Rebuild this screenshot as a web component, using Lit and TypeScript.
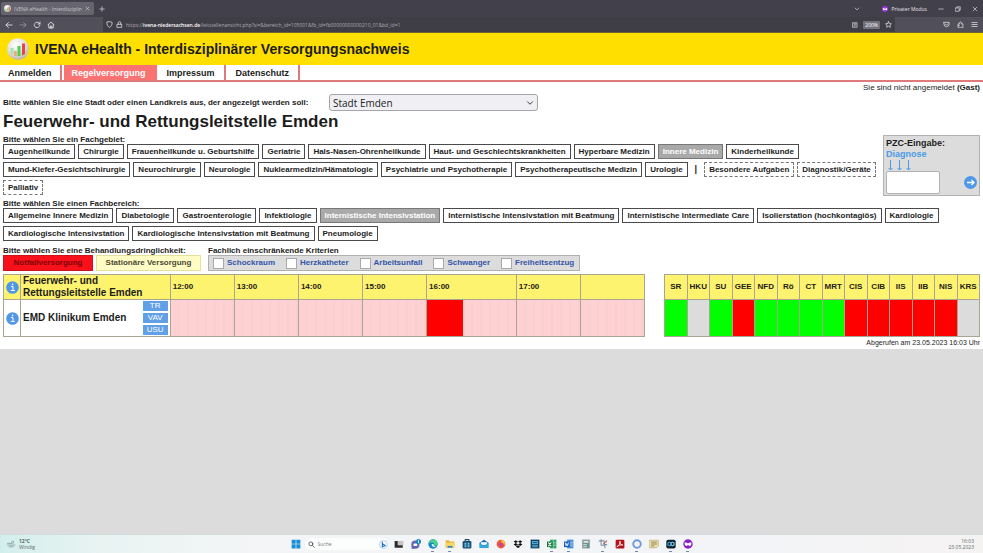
import { LitElement, html, css, svg, nothing } from "lit";
import { customElement } from "lit/decorators.js";
import { classMap } from "lit/directives/class-map.js";
import { styleMap } from "lit/directives/style-map.js";

type Chip = { label: string; active?: boolean; dashed?: boolean; bar?: boolean };

const chips = (...labels: string[]): Chip[] =>
  labels.map((l) => ({
    label: l.replace(/^[*~]/, ""),
    active: l.startsWith("*"),
    dashed: l.startsWith("~"),
  }));

const FACHGEBIETE: Chip[] = [
  ...chips(
    "Augenheilkunde", "Chirurgie", "Frauenheilkunde u. Geburtshilfe", "Geriatrie",
    "Hals-Nasen-Ohrenheilkunde", "Haut- und Geschlechtskrankheiten", "Hyperbare Medizin",
    "*Innere Medizin", "Kinderheilkunde", "Mund-Kiefer-Gesichtschirurgie", "Neurochirurgie",
    "Neurologie", "Nuklearmedizin/Hämatologie", "Psychiatrie und Psychotherapie",
    "Psychotherapeutische Medizin", "Urologie"
  ),
  { label: "|", bar: true },
  ...chips("~Besondere Aufgaben", "~Diagnostik/Geräte", "~Palliativ"),
];

const FACHBEREICHE = chips(
  "Allgemeine Innere Medizin", "Diabetologie", "Gastroenterologie", "Infektiologie",
  "*Internistische Intensivstation", "Internistische Intensivstation mit Beatmung",
  "Internistische Intermediate Care", "Isolierstation (hochkontagiös)", "Kardiologie",
  "Kardiologische Intensivstation", "Kardiologische Intensivstation mit Beatmung", "Pneumologie"
);

const KRITERIEN = ["Schockraum", "Herzkatheter", "Arbeitsunfall", "Schwanger", "Freiheitsentzug"];

const STUNDEN = [
  { label: "12:00", span: 10 },
  { label: "13:00", span: 10 },
  { label: "14:00", span: 10 },
  { label: "15:00", span: 10 },
  { label: "16:00", span: 14, closed: 40 },
  { label: "17:00", span: 10 },
  { label: "", span: 10 },
];
const SPAN_TOTAL = STUNDEN.reduce((sum, h) => sum + h.span, 0);
/** Share of the table, in percent, that the hours take together. */
const HOURS_SHARE = 74;

const RESSOURCEN: [string, string][] = [
  ["SR", "free"], ["HKU", "none"], ["SU", "free"], ["GEE", "shut"], ["NFD", "free"],
  ["Rö", "free"], ["CT", "free"], ["MRT", "free"], ["CIS", "shut"], ["CIB", "shut"],
  ["IIS", "shut"], ["IIB", "shut"], ["NIS", "shut"], ["KRS", "none"],
];

const icon = (body: unknown, size = 8, stroke = "currentColor") => html`<svg
  width=${size} height=${size} viewBox="0 0 16 16" fill="none" stroke=${stroke}
  stroke-width="1.7" stroke-linecap="round" stroke-linejoin="round" aria-hidden="true">${body}</svg>`;

const I = {
  back: svg`<path d="M14 8H2M7 3 2 8l5 5"/>`,
  forward: svg`<path d="M2 8h12M9 3l5 5-5 5"/>`,
  reload: svg`<path d="M13.500 9A5.500 5.500 0 1 1 12 4l2 2M14 2v4h-4"/>`,
  home: svg`<path d="M2 7.500 8 2l6 5.500M3.500 7v7h9V7M6.500 14v-4h3v4"/>`,
  shield: svg`<path d="M8 1.500 14 3c0 6-1.500 9-6 11.500C3.500 12 2 9 2 3z"/>`,
  lock: svg`<path d="M3 7.500h10v7H3zM5 7.500V4.500a3 3 0 0 1 6 0v3"/>`,
  reader: svg`<path d="M2.500 2h11v12h-11zM5.500 5h5M5.500 8h5M5.500 11h2"/>`,
  star: svg`<path d="m8 1.500 2 4.300 4.700.6-3.400 3.200.8 4.700L8 12l-4.100 2.300.8-4.700L1.300 6.400 6 5.800z"/>`,
  pocket: svg`<path d="M2 3h12v4a6 6 0 0 1-12 0zM5 6.500l3 3 3-3"/>`,
  ext: svg`<path d="M2.500 14.500v-8H6V4a2 2 0 0 1 4 0v2.500h3.500v8zM2.500 10h3"/>`,
  menu: svg`<path d="M2 3.500h12M2 8h12M2 12.500h12"/>`,
  down: svg`<path d="m3 5.500 5 5 5-5"/>`,
  close: svg`<path d="m3 3 10 10M13 3 3 13"/>`,
  plus: svg`<path d="M8 2v12M2 8h12"/>`,
  min: svg`<path d="M2 8h12"/>`,
  max: svg`<path d="M2 5h9v9H2zM5 5V2h9v9h-3"/>`,
  search: svg`<circle cx="6.500" cy="6.500" r="4.500"/><path d="m10 10 4.500 4.500"/>`,
  wind: svg`<path stroke="#8fa3a6" d="M1 6h9a2 2 0 1 0-2-2M1 9h13M4 12h7"/>`,
};

const logo = (size: number) => html`<svg width=${size} height=${size} viewBox="0 0 22 22" aria-hidden="true">
  <defs><radialGradient id="ball" cx=".4" cy=".3" r=".75">
    <stop offset="0" stop-color="#fff"/><stop offset=".6" stop-color="#dfdfdc"/><stop offset="1" stop-color="#b8b29a"/>
  </radialGradient></defs>
  <circle cx="11" cy="11" r="10.800" fill="url(#ball)"/>
  <path fill="#a4e4b0" d="M3.500 10h3v7l-3-1.500z"/>
  <path fill="#f0a880" d="M7 13h2.800v5H7z"/>
  <path fill="#4fce50" d="M10.500 8h3v10h-3z"/>
  <path fill="#e8404c" d="M15 5.500h3v10.500l-3 1.500z"/>
</svg>`;

const APPS: { name: string; art: unknown; open?: boolean }[] = [
  { name: "Taskansicht", art: svg`<path fill="#c4c4c4" d="M6 3h9v7H6z"/><path fill="#2b2b2b" d="M1 3h5v7h8v4H1z"/>` },
  { name: "Chat", art: svg`<circle cx="7" cy="9" r="6.500" fill="#6463b8"/><path fill="#6463b8" d="M1 11v5l5-1z"/><rect x="4" y="7" width="6" height="4" rx="1" fill="#fff"/><circle cx="12" cy="4" r="4" fill="#1787b5"/><path stroke="#fff" stroke-width="1.200" d="M12 2v4"/>` },
  { name: "Edge", open: true, art: svg`<circle cx="8" cy="8" r="7.500" fill="#1586c8"/><path fill="#4fd08c" d="M8 .5A7.500 7.500 0 0 1 15.500 8c0 3-5 3-6 1 1-3-2-5-8-2A7.500 7.500 0 0 1 8 .5z"/><path fill="#dff4fa" d="M6 8c-1 4 3 6 7 4-3-1-5-2-4-4z"/>` },
  { name: "Explorer", open: true, art: svg`<path fill="#e8b43a" d="M1 2h5l2 2h7v10H1z"/><path fill="#fbd966" d="M1 6h14v8H1z"/><path fill="#3a86d0" d="M4 11h8v3H4z"/>` },
  { name: "Store", art: svg`<rect x="1" y="3" width="14" height="12" rx="2" fill="#1d4e6e"/><path stroke="#1d4e6e" d="M5 3V1h6v2"/><path fill="#6cc7ef" d="M4 6h3v3H4zM9 6h3v3H9zM4 10h3v3H4zM9 10h3v3H9z"/>` },
  { name: "Mail", art: svg`<path fill="#1569b0" d="M1 6l7-5 7 5v8H1z"/><path fill="#e8f5fc" d="M3 5h10v5H3z"/><path fill="#31a8e6" d="m1 6 7 5 7-5v8H1z"/>` },
  { name: "Firefox", art: svg`<circle cx="8" cy="8" r="7" fill="#f2583c"/><path fill="#fbc23c" d="M9 1c5 2 6 6 5 9-2-3-3-4-6-5z"/><circle cx="8" cy="9" r="3" fill="#c1459c"/>` },
  { name: "Dropbox", art: svg`<path fill="#111" d="m4.500 2 3.500 2.300L4.500 6.500 1 4.300zM11.500 2 15 4.300l-3.500 2.200L8 4.300zM4.500 6.500 8 8.800 4.500 11 1 8.800zM11.500 6.500 15 8.800 11.500 11 8 8.800zM8 10l3.500 2.200L8 14.500l-3.500-2.300z"/>` },
  { name: "Paketmanager", art: svg`<rect x="1" y="1" width="14" height="14" fill="#153f5f"/><path stroke="#4ea9d6" d="M4 4h8v3H4zM4 10h8M4 12.500h8"/>` },
  { name: "Excel", open: true, art: svg`<path fill="#2fa566" d="M5 1h10v14H5z"/><path stroke="#b6e3c9" stroke-width="1" d="M10 1v14M5 6h10M5 10h10"/><path fill="#17703f" d="M0 4h9v9H0z"/><path stroke="#fff" d="m2.500 6 4 5M6.500 6l-4 5"/>` },
  { name: "Word", open: true, art: svg`<path fill="#3f8fdc" d="M5 1h10v14H5z"/><path stroke="#cfe3f8" stroke-width="1" d="M10 5h4M10 8h4M10 11h4"/><path fill="#1c57ac" d="M0 4h9v9H0z"/><path stroke="#fff" stroke-width="1.200" d="m2 6 1.200 5L4.500 7l1.300 4L7 6"/>` },
  { name: "Rechner", art: svg`<path fill="#7d8c8c" d="M2 1h12v14H2z"/><path fill="#d5eee8" d="M4 3h8v3H4z"/><path fill="#e8efef" d="M4 8h2v2H4zM7 8h2v2H7zM4 11h2v2H4zM7 11h2v2H7z"/><path fill="#3aa7a0" d="M10 8h2v5h-2z"/>` },
  { name: "Ausschneiden", open: true, art: svg`<path stroke="#7b93a8" d="M2 3h8v6h4M5 1v9h6v4"/><path stroke="#c5664d" d="m9 8 5-5"/>` },
  { name: "Acrobat", art: svg`<rect x="1" y="1" width="14" height="14" rx="2" fill="#b5131a"/><path stroke="#fff" stroke-width="1.300" d="M3.500 12c3-1 5-5 4.500-8.500C7.500 8 10 10 12.500 9.500 9 9 6 10 3.500 12z"/>` },
  { name: "Signal", open: true, art: svg`<circle cx="8" cy="8" r="6" stroke="#6b98e0" stroke-width="3"/>` },
  { name: "Notizen", art: svg`<path fill="#f0e2a8" stroke="#a79c6c" stroke-width="1" d="M1 2h14v9l-3 3H1z"/><path stroke="#6d6648" stroke-width="1.200" d="M4 5h8M4 8h8M4 11h4"/>` },
  { name: "Webex", open: true, art: svg`<rect x=".5" y="1" width="15" height="14" rx="3" fill="#12242e"/><circle cx="5.500" cy="8" r="2.700" stroke="#42a5d8"/><circle cx="10.500" cy="8" r="2.700" stroke="#7fd0ea"/>` },
  { name: "Privates Fenster", open: true, art: svg`<circle cx="8" cy="8" r="7.500" fill="#8a22c5"/><path fill="#fff" d="M2.500 6q2.500-1 5.500 1 3-2 5.500-1 0 5-3 5L8 9.500 5.500 11q-3 0-3-5z"/>` },
];

@customElement("browser-chrome")
export class BrowserChrome extends LitElement {
  static styles = css`
    :host { display: block; color: #e6e4ea; font: 5px/8px "Open Sans", "Noto Sans", sans-serif; }
    svg { display: block; flex: none; }
    button { all: unset; display: grid; place-items: center; flex: none; }
    .tabs { display: flex; align-items: center; height: 17px; background: #42404a; padding-right: 5px; }
    .tab { display: flex; align-items: center; gap: 3px; height: 13px; margin: 0 5px 0 1px; padding: 0 4px 0 3px; border-radius: 2px; background: #66646f; }
    .tab-title { white-space: nowrap; color: #c9c7ce; }
    .spacer { flex: 1; }
    .private { display: flex; align-items: center; gap: 3px; margin: 0 11px 0 22px; }
    .window { display: flex; gap: 11px; }
    .bar { display: flex; align-items: center; height: 15px; background: #514f59; border-bottom: 1px solid #6f6430; }
    .nav { display: flex; gap: 6px; padding: 0 5px; width: 93px; }
    .dim { opacity: 0.45; }
    .url { display: flex; align-items: center; gap: 3px; flex: 1; height: 15px; padding: 0 3px; background: #3f3d46; }
    .address { all: unset; flex: 1; color: #aeacb4; }
    .address b { color: #fff; font-weight: 600; }
    .zoom { background: #73717b; padding: 0 2px; border-radius: 1px; color: #fff; margin: 0 2px; }
    .tools { display: flex; gap: 7px; padding: 0 5px 0 48px; }
  `;
  render() {
    return html`
      <div class="tabs">
        <div class="tab">${logo(7)}<span class="tab-title">IVENA eHealth - Interdisziplin</span>
          <button aria-label="Tab schließen">${icon(I.close, 5)}</button></div>
        <button aria-label="Neuer Tab">${icon(I.plus, 6)}</button>
        <span class="spacer"></span>
        <button aria-label="Alle Tabs">${icon(I.down, 6)}</button>
        <span class="private">
          <svg width="6" height="6" viewBox="0 0 16 16" aria-hidden="true"><circle cx="8" cy="8" r="8" fill="#9a35e0"/><path fill="#fff" d="M2 6q3-1 6 1 3-2 6-1 0 5-3 5L8 9.500 5 11q-3 0-3-5z"/></svg>
          Privater Modus</span>
        <span class="window">
          <button aria-label="Minimieren">${icon(I.min, 6)}</button>
          <button aria-label="Wiederherstellen">${icon(I.max, 6)}</button>
          <button aria-label="Schließen">${icon(I.close, 6)}</button>
        </span>
      </div>
      <div class="bar">
        <div class="nav">
          <button aria-label="Zurück">${icon(I.back)}</button>
          <button class="dim" aria-label="Vor">${icon(I.forward)}</button>
          <button aria-label="Neu laden">${icon(I.reload)}</button>
          <button aria-label="Startseite">${icon(I.home)}</button>
        </div>
        <div class="url">
          ${icon(I.shield, 7)}${icon(I.lock, 7)}
          <a class="address" href="#">https://<b>ivena-niedersachsen.de</b>/leitstellenansicht.php?si=&amp;bereich_id=105001&amp;fb_id=fb00000000000210_01&amp;bd_id=1</a>
          ${icon(I.reader, 6)}<span class="zoom">200%</span>${icon(I.star, 7)}
        </div>
        <div class="tools">
          <button aria-label="Pocket">${icon(I.pocket, 7)}</button>
          <button aria-label="Erweiterungen">${icon(I.ext, 7)}</button>
          <button aria-label="Menü">${icon(I.menu, 7)}</button>
        </div>
      </div>`;
  }
}

@customElement("task-bar")
export class TaskBar extends LitElement {
  static styles = css`
    :host { display: grid; grid-template-columns: 1fr auto 1fr; align-items: center; height: 19px;
      background: linear-gradient(90deg, #d3efec, #e8f3f2 10%, #f3f5f6 25%, #f2f4f7 75%, #f5f2f2);
      border-top: 1px solid #d2dcdc; font: 5px/6px "Open Sans", "Noto Sans", sans-serif; color: #5b6b6c; }
    svg { display: block; flex: none; }
    button { all: unset; display: grid; place-items: center; position: relative; }
    .weather { display: flex; align-items: center; gap: 3px; padding-left: 7px; }
    .weather b { display: block; }
    .center { display: flex; align-items: center; gap: 7px; }
    .find { display: flex; align-items: center; gap: 3px; width: 80px; height: 12px; padding: 0 1px 0 3px; border-radius: 6px; background: #fbfcfc; color: #444; margin: 0 -2px 0 -3px; }
    .find input { all: unset; flex: 1; width: 20px; }
    .find input::placeholder { color: #777; }
    .open::after { content: ""; position: absolute; bottom: -3px; width: 3px; height: 1px; background: #6d8ba3; }
    .clock { text-align: right; padding-right: 9px; }
  `;
  render() {
    return html`
      <div class="weather">${icon(I.wind, 9)}<span><b>12°C</b>Windig</span></div>
      <div class="center">
        <button aria-label="Start"><svg width="10" height="10" viewBox="0 0 16 16"><path fill="#1b8fd6" d="M1 1h6.500v6.500H1zM8.500 1H15v6.500H8.500zM1 8.500h6.500V15H1zM8.500 8.500H15V15H8.500z"/></svg></button>
        <label class="find">${icon(I.search, 7)}<input placeholder="Suche" aria-label="Suche" />
          <svg width="9" height="9" viewBox="0 0 16 16" fill="none" aria-hidden="true"><circle cx="8" cy="8" r="7" stroke="#7db5e0"/><path stroke="#1f74c6" stroke-width="2" d="M6 3v9l5-2-4-3"/></svg>
        </label>
        ${APPS.map((a) => html`<button aria-label=${a.name} class=${classMap({ open: !!a.open })}>${icon(a.art, 10, "none")}</button>`)}
      </div>
      <div class="clock">16:03<br />23.05.2023</div>`;
  }
}

@customElement("app-root")
export class AppRoot extends LitElement {
  static styles = css`
    :host { display: flex; flex-direction: column; min-height: 100vh; background: #dcdcdc; color: #1c1c1c;
      font: 8px/10px "Liberation Sans", Arial, sans-serif; }
    * { box-sizing: border-box; }
    button { font: inherit; color: inherit; margin: 0; }
    svg { display: block; flex: none; }
    .page { background: #fff; }
    .brand { display: flex; align-items: center; gap: 6px; height: 32px; padding-left: 7px; background: #ffdf00; font: bold 14px/18px "Liberation Sans", Arial, sans-serif; }
    .menu { display: flex; height: 17px; border-bottom: 2px solid #df7a7c; font-size: 9px; font-weight: bold; }
    .menu a { display: flex; align-items: center; padding: 0 9px 0 10px; border-right: 2px solid #df7a7c; color: inherit; text-decoration: none; }
    .menu a:first-child { padding: 0 8px; }
    .menu .current { margin-left: 2px; padding: 0 9px 0 8px; background: #fa7373; color: #fff; border-color: #fa7373; }
    .login { text-align: right; padding: 1px 3px; }
    .body { padding: 0 3px; }
    .city { display: flex; align-items: center; gap: 4px; font-weight: bold; }
    .city label { min-width: 322px; }
    .drop { display: grid; align-items: center; width: 209px; }
    .drop > * { grid-area: 1 / 1; }
    .drop svg { justify-self: end; margin-right: 4px; pointer-events: none; }
    select { appearance: none; width: 100%; height: 17px; padding: 0 3px; border: 1px solid #a5a5aa; border-radius: 3px; background: #f0f0f4; color: #222; font: 10px/14px "Open Sans", "Noto Sans", sans-serif; }
    h1 { margin: 0 0 2px; font-size: 17px; line-height: 22px; }
    h2 { margin: 0; font-size: 8px; line-height: 9px; }
    .area { display: flex; align-items: flex-start; gap: 3px; }
    .grow { flex: 1; }
    .chips { display: flex; flex-wrap: wrap; gap: 3px; }
    .chip { height: 15px; padding: 0 4px; border: 1px solid #4a4a4a; background: #fff; font-weight: bold; white-space: nowrap; }
    .chip.active { background: #a9a9a9; color: #fff; border-color: #777; }
    .chip.dashed { border-style: dashed; border-color: #777; }
    .bar { padding: 0 4px; font-weight: bold; font-size: 9px; line-height: 14px; }
    .pzc { width: 97px; height: 61px; padding: 2px; background: #dcdcdc; border: 1px solid #b2b2b2; font-size: 9px; font-weight: bold; line-height: 11px; }
    .pzc label { display: block; }
    .pzc em { display: block; font-style: normal; color: #4a9be8; }
    .entry { display: flex; justify-content: space-between; align-items: center; }
    .entry input { width: 54px; height: 23px; border: 1px solid #b2b2b2; border-radius: 2px; background: #fff; }
    .round { all: unset; display: grid; }
    .section { margin-top: 3px; }
    .urgency { display: flex; gap: 7px; margin-top: 5px; }
    .pair { display: flex; gap: 3px; }
    .wide { height: 16px; border: 1px solid #e6e09a; background: #fffcc6; color: #4c4a30; font-weight: bold; width: 105px; padding: 0; }
    .wide.red { width: 90px; background: #f8101a; color: #7c0408; border-color: #c8141a; }
    .criteria { display: flex; gap: 11px; height: 16px; align-items: center; padding: 0 5px 0 4px; background: #dcdcdc; border: 1px solid #b0b0b0; color: #3354a8; font-weight: bold; }
    .criteria label { display: flex; align-items: center; gap: 3px; }
    .criteria input { appearance: none; width: 11px; height: 11px; margin: 0; border: 1px solid #a9a9a9; background: #fff; }
    .tables { display: grid; grid-template-columns: 642fr 316fr; gap: 19px; margin-top: 3px; }
    table { border-collapse: collapse; table-layout: fixed; width: 100%; }
    th, td { border: 1px solid #aaa592; padding: 0; }
    th { height: 25px; background: #fdf36e; text-align: left; font-size: 8px; }
    td { height: 36px; }
    .info { width: 17px; }
    .info svg { margin: auto; }
    .house { padding-left: 2px; font-size: 10px; line-height: 12px; }
    .clinic { display: flex; align-items: center; justify-content: space-between; padding-right: 2px; font-size: 10px; font-weight: bold; }
    .tags { display: grid; gap: 2px; width: 25px; font-size: 8px; font-weight: normal; line-height: 10px; text-align: center; }
    .tags a { color: #fff; background: #619fe6; text-decoration: none; }
    .hour { padding-left: 2px; }
    .slot { background: repeating-linear-gradient(90deg, #ffd0d2 0 8px, #ecd0d0 8px 9px); }
    .closed { height: 36px; background: #f00; }
    .res th { text-align: center; }
    .free { background: #0f0; }
    .shut { background: #f00; }
    .none { background: #dcdcdc; }
    .stamp { text-align: right; font-size: 7px; line-height: 12px; }
    .rest { flex: 1; }
  `;

  private chip(c: Chip) {
    return c.bar
      ? html`<span class="bar">${c.label}</span>`
      : html`<button class=${classMap({ chip: true, active: !!c.active, dashed: !!c.dashed })}>${c.label}</button>`;
  }

  private info() {
    return html`<svg width="13" height="13" viewBox="0 0 13 13" role="img" aria-label="Info">
      <circle cx="6.500" cy="6.500" r="6.300" fill="#4f97e8" />
      <path d="M5 5.500h2v4M4.800 9.500h4" stroke="#fff" fill="none" /><circle cx="6.600" cy="3.400" r=".8" fill="#fff" />
    </svg>`;
  }

  render() {
    return html`
      <browser-chrome></browser-chrome>
      <main class="page">
        <header class="brand">${logo(22)}<span>IVENA eHealth - Interdisziplinärer Versorgungsnachweis</span></header>
        <nav class="menu">
          <a href="#">Anmelden</a><a href="#" class="current">Regelversorgung</a><a href="#">Impressum</a><a href="#">Datenschutz</a>
        </nav>
        <div class="login">Sie sind nicht angemeldet <b>(Gast)</b></div>
        <div class="body">
          <div class="city">
            <label for="city">Bitte wählen Sie eine Stadt oder einen Landkreis aus, der angezeigt werden soll:</label>
            <span class="drop"><select id="city"><option>Stadt Emden</option></select>${icon(I.down, 8)}</span>
          </div>
          <h1>Feuerwehr- und Rettungsleitstelle Emden</h1>
          <div class="area">
            <section class="grow">
              <h2>Bitte wählen Sie ein Fachgebiet:</h2>
              <div class="chips">${FACHGEBIETE.map((c) => this.chip(c))}</div>
            </section>
            <form class="pzc">
              <label for="pzc">PZC-Eingabe:<em>Diagnose</em></label>
              <svg width="30" height="11" viewBox="0 0 30 11" fill="none" stroke="#4a9be8" aria-hidden="true">
                <path d="M4.500 0v10M2.500 8l2 2 2-2M13.500 0v10M11.500 8l2 2 2-2M22.500 0v10M20.500 8l2 2 2-2" />
              </svg>
              <div class="entry">
                <input id="pzc" />
                <button type="button" class="round" aria-label="Suchen">
                  <svg width="13" height="13" viewBox="0 0 13 13"><circle cx="6.500" cy="6.500" r="6.500" fill="#4f97e8" /><path d="M3 6.500h7M7.500 4 10 6.500 7.500 9" stroke="#fff" stroke-width="1.300" fill="none" /></svg>
                </button>
              </div>
            </form>
          </div>
          <section class="section">
            <h2>Bitte wählen Sie einen Fachbereich:</h2>
            <div class="chips">${FACHBEREICHE.map((c) => this.chip(c))}</div>
          </section>
          <div class="urgency">
            <section>
              <h2>Bitte wählen Sie eine Behandlungsdringlichkeit:</h2>
              <div class="pair"><button class="wide red">Notfallversorgung</button><button class="wide">Stationäre Versorgung</button></div>
            </section>
            <section>
              <h2>Fachlich einschränkende Kriterien</h2>
              <div class="criteria">${KRITERIEN.map((k) => html`<label><input type="checkbox" />${k}</label>`)}</div>
            </section>
          </div>
          <div class="tables">
            <table>
              <thead><tr>
                <th class="info">${this.info()}</th>
                <th class="house">Feuerwehr- und<br />Rettungsleitstelle Emden</th>
                ${STUNDEN.map((h) => html`<th class="hour" style=${styleMap({ width: `${(h.span / SPAN_TOTAL) * HOURS_SHARE}%` })}>${h.label}</th>`)}
              </tr></thead>
              <tbody><tr>
                <td class="info">${this.info()}</td>
                <td class="house"><div class="clinic">EMD Klinikum Emden
                  <span class="tags"><a href="#">TR</a><a href="#">VAV</a><a href="#">USU</a></span></div></td>
                ${STUNDEN.map((h) => html`<td class="slot">${h.closed
                  ? html`<div class="closed" style=${styleMap({ width: `${h.closed}%` })}></div>`
                  : nothing}</td>`)}
              </tr></tbody>
            </table>
            <table class="res">
              <thead><tr>${RESSOURCEN.map(([n]) => html`<th>${n}</th>`)}</tr></thead>
              <tbody><tr>${RESSOURCEN.map(([n, s]) => html`<td class=${s} aria-label=${n}></td>`)}</tr></tbody>
            </table>
          </div>
          <div class="stamp">Abgerufen am 23.05.2023 16:03 Uhr</div>
        </div>
      </main>
      <div class="rest"></div>
      <task-bar></task-bar>`;
  }
}
